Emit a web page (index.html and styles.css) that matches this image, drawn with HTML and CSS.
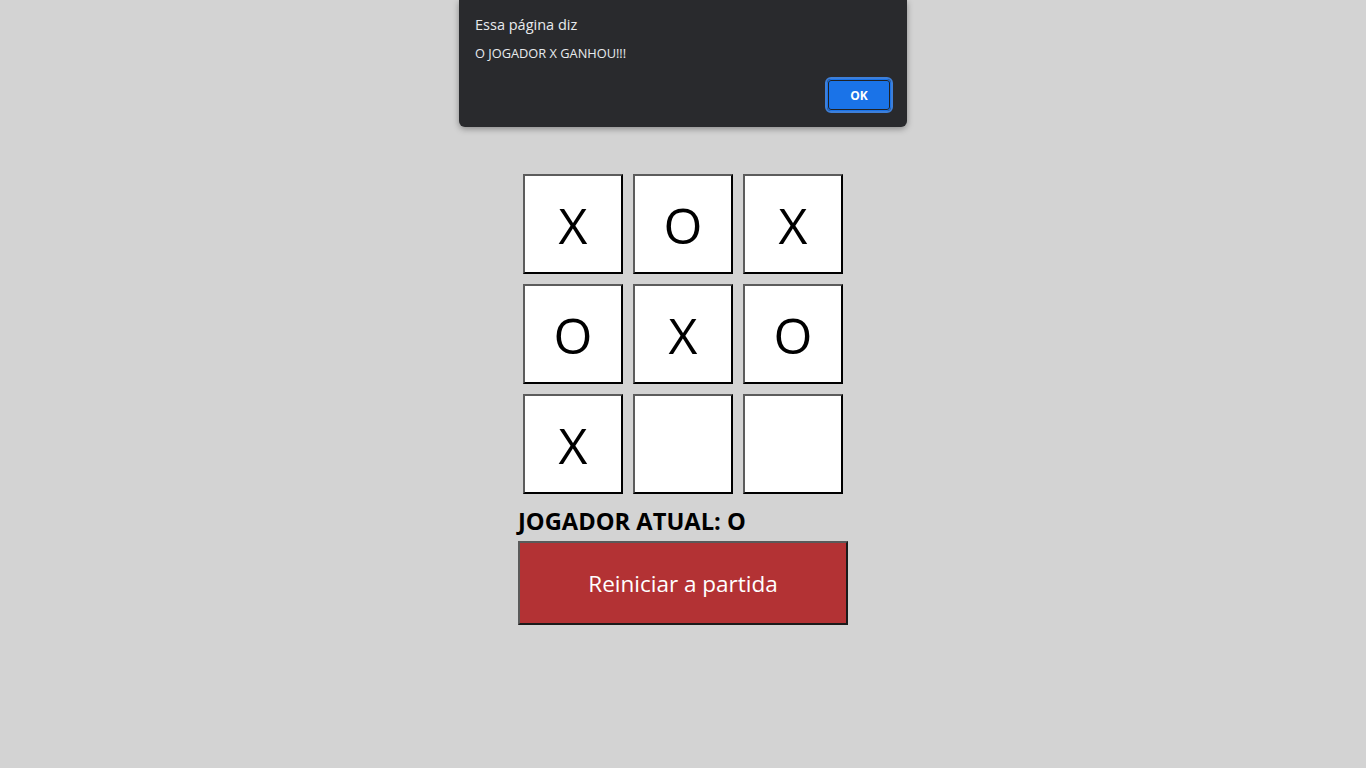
FILE: index.html
```html
<!DOCTYPE html>
<html lang="pt-BR">
<head>
<meta charset="utf-8">
<title>Jogo da Velha</title>
<link rel="stylesheet" href="styles.css">
</head>
<body>
<main class="game">
  <div class="board">
    <button class="cell">X</button>
    <button class="cell">O</button>
    <button class="cell">X</button>
    <button class="cell">O</button>
    <button class="cell">X</button>
    <button class="cell">O</button>
    <button class="cell">X</button>
    <button class="cell"></button>
    <button class="cell"></button>
  </div>
  <h2 class="current">JOGADOR ATUAL: O</h2>
  <button class="restart">Reiniciar a partida</button>
</main>
<div class="dialog">
  <div class="dialog-title">Essa página diz</div>
  <div class="dialog-msg">O JOGADOR X GANHOU!!!</div>
  <div class="dialog-actions">
    <button class="dialog-ok">OK</button>
  </div>
</div>
</body>
</html>
```
FILE: styles.css
```css
html, body {
  margin: 0;
  padding: 0;
}
body {
  background: #d3d3d3;
  font-family: "Open Sans", "Noto Sans", "Liberation Sans", sans-serif;
  height: 768px;
  overflow: hidden;
}
.game {
  width: 330px;
  margin: 0 auto;
  padding-top: 174px;
  display: flex;
  flex-direction: column;
}
.board {
  display: grid;
  grid-template-columns: repeat(3, 100px);
  grid-auto-rows: 100px;
  gap: 10px;
  justify-content: center;
}
.cell {
  box-sizing: border-box;
  width: 100px;
  height: 100px;
  margin: 0;
  padding: 0;
  background: #fff;
  border: 2px solid;
  border-color: #5c5c5c #000 #000 #5c5c5c;
  font-family: "Open Sans", "Noto Sans", sans-serif;
  font-size: 50px;
  font-weight: 400;
  color: #000;
  line-height: 1;
  display: flex;
  align-items: center;
  justify-content: center;
  padding-top: 2px;
}
.current {
  margin: 12px 0 0 0;
  font-size: 23.7px;
  font-weight: 700;
  line-height: 30px;
  color: #000;
}
.restart {
  box-sizing: border-box;
  margin-top: 5px;
  width: 330px;
  height: 84px;
  background: #b33234;
  color: #fff;
  border: 2px solid;
  border-color: #5a5a5a #1a1a1a #1a1a1a #5a5a5a;
  font-family: "Open Sans", "Noto Sans", sans-serif;
  font-size: 22.5px;
  padding: 0;
}
.dialog {
  position: absolute;
  top: 0;
  left: 459px;
  width: 448px;
  height: 127px;
  box-sizing: border-box;
  background: #292a2d;
  border-radius: 0 0 6px 6px;
  box-shadow: 0 2px 6px rgba(0, 0, 0, 0.35);
  padding: 15px 16px 0 16px;
  color: #e8eaed;
}
.dialog-title {
  font-size: 14.5px;
  line-height: 20px;
}
.dialog-msg {
  margin-top: 10px;
  font-size: 12.8px;
  line-height: 16px;
}
.dialog-actions {
  display: flex;
  justify-content: flex-end;
  margin-top: 18px;
}
.dialog-ok {
  box-sizing: border-box;
  width: 64px;
  height: 32px;
  background: #1a73e8;
  color: #fff;
  border: 1px solid #1a73e8;
  outline: 2px solid #3d7fd9;
  outline-offset: 0;
  border-radius: 4px;
  box-shadow: inset 0 0 0 1px #202124;
  font-family: "Open Sans", "Noto Sans", sans-serif;
  font-size: 12px;
  font-weight: 700;
  padding: 0;
}
```
